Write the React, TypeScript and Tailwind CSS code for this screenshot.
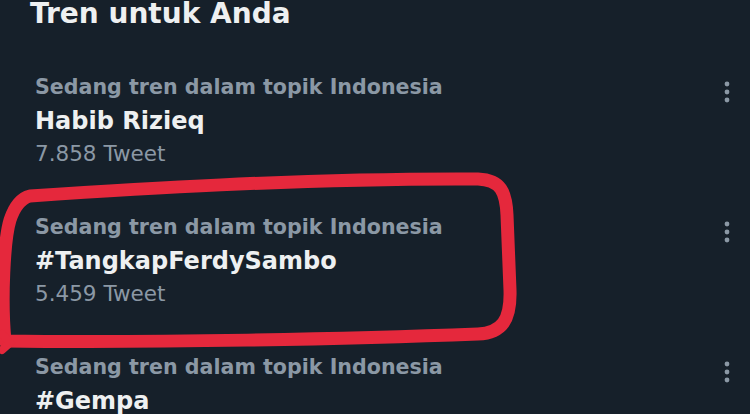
const trends = [
  { name: "Habib Rizieq", count: "7.858 Tweet" },
  { name: "#TangkapFerdySambo", count: "5.459 Tweet" },
  { name: "#Gempa", count: "3.120 Tweet" },
]

function MoreIcon() {
  return (
    <svg width="6" height="22" viewBox="0 0 6 22" className="mt-[11px] shrink-0">
      <circle cx="3" cy="3" r="2.4" fill="#8b98a5" />
      <circle cx="3" cy="11" r="2.4" fill="#8b98a5" />
      <circle cx="3" cy="19" r="2.4" fill="#8b98a5" />
    </svg>
  )
}

export default function App() {
  return (
    <div
      className="relative w-[750px] h-[414px] overflow-hidden bg-[#16202a]"
      style={{ fontFamily: '"DejaVu Sans", sans-serif' }}
    >
      <h1 className="pl-[30px] text-[28px] leading-[28px] font-bold text-[#eef0f1] mb-[22px]">
        Tren untuk Anda
      </h1>

      {trends.map((t) => (
        <div key={t.name} className="flex justify-between pl-[35px] pr-[20px] py-5">
          <div>
            <p className="text-[20.6px] leading-[34px] font-bold text-[#8b98a5]">
              Sedang tren dalam topik Indonesia
            </p>
            <p className="text-[24px] leading-[34px] font-bold text-[#eef0f1]">{t.name}</p>
            <p className="text-[21.5px] leading-[32px] text-[#8b98a5]">{t.count}</p>
          </div>
          <MoreIcon />
        </div>
      ))}

      {/* coretan merah di sekeliling tren kedua */}
      <svg
        className="absolute left-0 top-0 pointer-events-none"
        width="750"
        height="414"
        viewBox="0 0 750 414"
      >
        <path
          d="M 30 196 C 120 190, 300 178, 478 179 C 501 180, 506 192, 507 215 L 510 290 C 511 320, 502 333, 478 334 C 350 339, 150 343, 5 341 C 1 300, 4 240, 10 220 C 15 205, 22 198, 30 196 Z"
          fill="none"
          stroke="#e5283c"
          strokeWidth="13"
          strokeLinejoin="round"
        />
        <path d="M 2 334 L 10 343 L 2 350" fill="none" stroke="#e5283c" strokeWidth="8" strokeLinecap="round" />
      </svg>
    </div>
  )
}
